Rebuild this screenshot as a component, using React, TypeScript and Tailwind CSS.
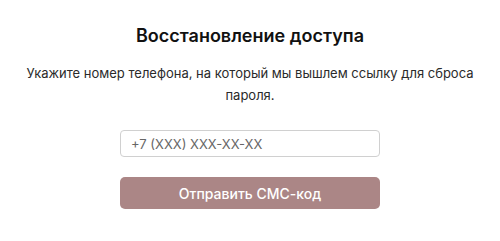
export default function App() {
  return (
    <div className="w-[500px] h-[241px] bg-white flex flex-col items-center" style={{ fontFamily: "Inter, 'Noto Sans', sans-serif" }}>
      <h1 className="mt-[24px] text-[18px] leading-[24px] font-semibold text-[#111]">Восстановление доступа</h1>
      <p className="mt-[14px] w-[450px] text-center text-[13px] leading-[22px] text-[#2a2a2a]">
        Укажите номер телефона, на который мы вышлем ссылку для сброса пароля.
      </p>
      <input
        className="mt-[24px] w-[260px] h-[27px] border border-[#d0d0d0] rounded-[4px] px-[10px] text-[13px] text-[#333] placeholder:text-[#666] outline-none"
        placeholder="+7 (XXX) XXX-XX-XX"
      />
      <button className="mt-[20px] w-[260px] h-[32px] rounded-[5px] bg-[#ab8686] text-white text-[14px] font-medium">
        Отправить СМС-код
      </button>
    </div>
  );
}
